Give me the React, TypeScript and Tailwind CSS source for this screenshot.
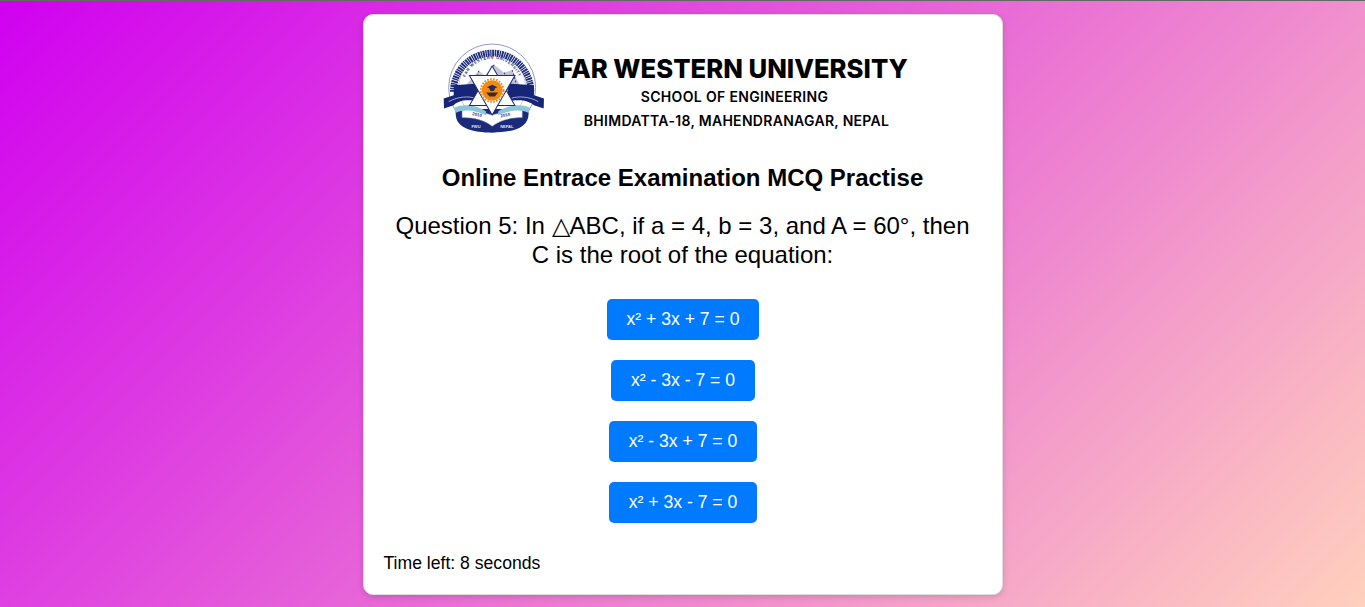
import React from 'react';

const options = ['x² + 3x + 7 = 0', 'x² - 3x - 7 = 0', 'x² - 3x + 7 = 0', 'x² + 3x - 7 = 0'];

// University seal, units are 1/3 px
const Seal = () => (
  <svg viewBox="40 30 320 290" width="107" height="97" className="-mt-[6px] shrink-0">
    <defs>
      <path id="sealArc" d="M108 146 A86 86 0 0 1 272 146" />
    </defs>
    <circle cx="190" cy="172" r="130" fill="#fff" stroke="#5a6aa8" strokeWidth="2" />
    <circle cx="190" cy="172" r="100" fill="#fff" stroke="#8d97c4" strokeWidth="1.5" />
    {/* devanagari ring is too small to read, so it is a dashed band */}
    <path d="M74 185 A116 116 0 0 1 306 185" fill="none" stroke="#1f2d7c" strokeWidth="20" strokeDasharray="6 2 4 2" />
    <path d="M108 168 L150 122 L168 136 L196 104 L226 128 L250 120 L274 168 L190 190Z" fill="#c3c6d2" />
    <path d="M150 122 L138 165 M196 104 L176 135 M226 128 L246 165 M250 120 L262 160" stroke="#1f2d7c" strokeWidth="3" strokeDasharray="5 6" fill="none" />
    <text fontSize="12" fontWeight="700" fill="#27357f" fontFamily="'Liberation Sans', sans-serif">
      <textPath href="#sealArc" startOffset="5" textLength="205">FAR WESTERN UNIVERSITY</textPath>
    </text>
    <path d="M82 236 C72 295 130 305 190 307 C250 305 308 295 298 236 Z" fill="#1b2a7a" />
    <path d="M100 232 L190 254 L280 232 L280 262 C240 262 210 272 190 288 C170 272 140 262 100 262 Z" fill="#fff" stroke="#8d97c4" strokeWidth="1.5" />
    <path d="M78 232 C110 218 150 228 172 244 L172 256 C140 240 110 236 80 248Z" fill="#8cc6d9" />
    <path d="M302 232 C270 218 230 228 208 244 L208 256 C240 240 270 236 300 248Z" fill="#8cc6d9" />
    <path d="M45 205 L75 195 L75 165 L150 160 L150 214 C115 205 85 212 75 225 L46 235Z" fill="#172579" />
    <path d="M345 205 L315 195 L315 165 L236 160 L236 214 C272 205 302 212 315 225 L344 235Z" fill="#172579" />
    <path d="M60 214 C90 198 120 198 140 204" stroke="#dfe6f3" strokeWidth="2" fill="none" />
    <path d="M328 214 C298 198 268 198 248 204" stroke="#dfe6f3" strokeWidth="2" fill="none" />
    <path d="M190 108 L258 226 L122 226Z" fill="#fff" stroke="#1b2a7a" strokeWidth="3" />
    <path d="M190 254 L258 136 L122 136Z" fill="#fff" stroke="#1b2a7a" strokeWidth="3" />
    <circle cx="190" cy="181" r="31" fill="#f08a12" />
    <circle cx="190" cy="181" r="34" fill="none" stroke="#f08a12" strokeWidth="6" strokeDasharray="5 4" />
    <circle cx="190" cy="175" r="8" fill="#3a2a20" />
    <path d="M172 187 L208 187 L198 199 L182 199Z" fill="#3a2a20" />
    <path d="M174 171 L190 164 L206 171 L190 177Z" fill="#1b2a7a" />
    <text x="130" y="254" fontSize="13" fontWeight="700" fill="#27357f" fontFamily="'Liberation Sans', sans-serif" transform="rotate(12 130 254)">2010</text>
    <text x="216" y="262" fontSize="13" fontWeight="700" fill="#27357f" fontFamily="'Liberation Sans', sans-serif" transform="rotate(-12 216 262)">2010</text>
    <text x="128" y="294" fontSize="12" fontWeight="700" fill="#dfe6f3" fontFamily="'Liberation Sans', sans-serif">FWU</text>
    <text x="214" y="294" fontSize="12" fontWeight="700" fill="#dfe6f3" fontFamily="'Liberation Sans', sans-serif">NEPAL</text>
  </svg>
);

const App = () => {
  return (
    <div className="h-[607px] overflow-hidden border-t border-[#666] bg-[linear-gradient(135deg,#d000f0,#ffd0bd)] pt-[13px] font-['Liberation_Sans',sans-serif]">
      <div className="mx-auto h-[581px] w-[640px] rounded-[10px] border border-[#ddd] bg-white p-[19px] shadow-[0_2px_6px_rgba(0,0,0,0.15)]">
        <div className="flex h-[110px] items-center justify-center pt-[4px] pr-[15px]">
          <Seal />
          <div className="ml-[9px] flex w-[350px] flex-col items-center font-['Inter',sans-serif] text-black">
            <div className="mt-[2px] text-[25.7px] leading-[36px] font-extrabold whitespace-nowrap">FAR WESTERN UNIVERSITY</div>
            <div className="-mt-[1px] pl-[3px] text-[14px] leading-[22px] font-semibold tracking-[0.33px] whitespace-nowrap">SCHOOL OF ENGINEERING</div>
            <div className="mt-[1px] pl-[7px] text-[14px] leading-[24px] font-semibold tracking-[0.3px] whitespace-nowrap">BHIMDATTA-18, MAHENDRANAGAR, NEPAL</div>
          </div>
        </div>
        <h1 className="mt-[20px] text-center text-2xl leading-[28px] font-bold text-black">Online Entrace Examination MCQ Practise</h1>
        <p className="mt-[19px] px-2 text-center text-2xl leading-[29px] text-black">
          Question 5: In △ABC, if a = 4, b = 3, and A = 60°, then C is the root of the equation:
        </p>
        <div className="mt-[30px] flex flex-col items-center gap-5 pl-[1px]">
          {options.map(opt => (
            <button key={opt} className="h-[41px] rounded-[5px] bg-[#007bff] px-5 text-[17.6px] text-white">
              {opt}
            </button>
          ))}
        </div>
        <p className="mt-[30px] pl-[1px] text-[17.6px] leading-[21px] text-black">Time left: 8 seconds</p>
      </div>
    </div>
  );
};

export default App;
